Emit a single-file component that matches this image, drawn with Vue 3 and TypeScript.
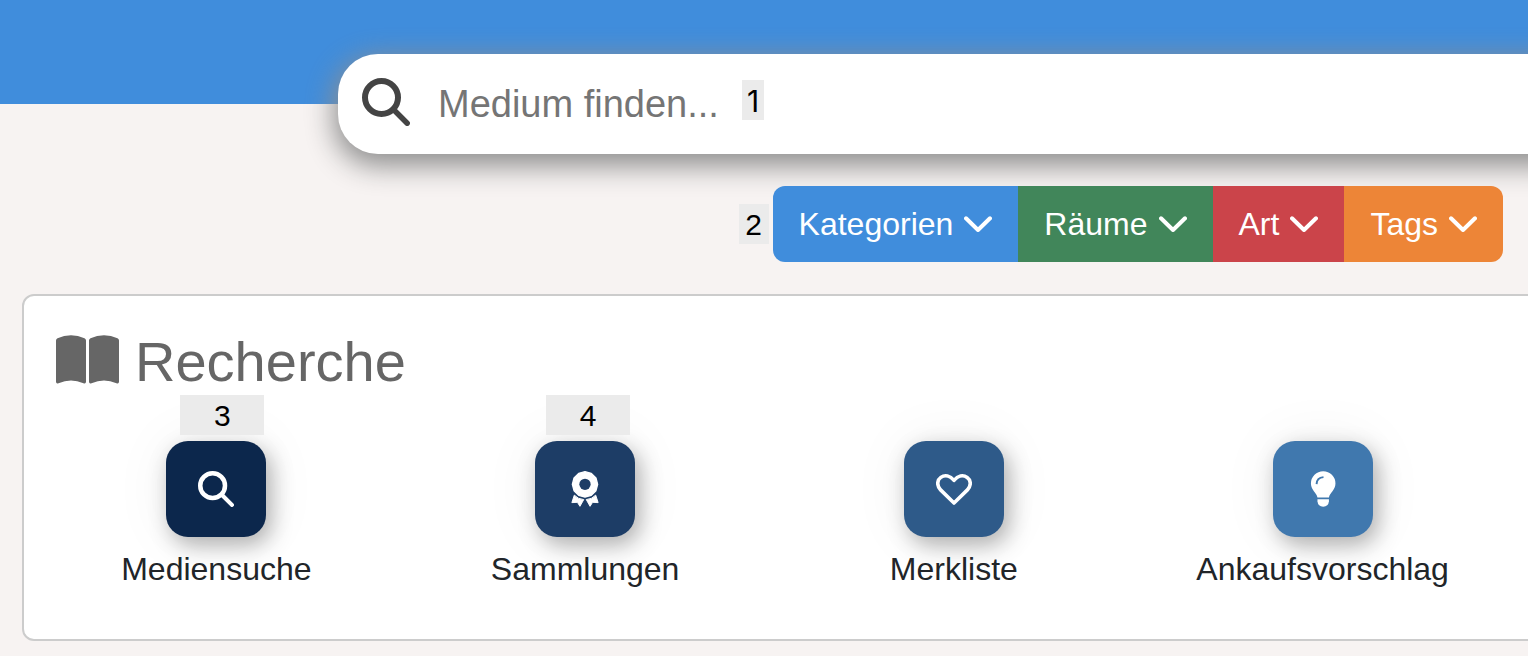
<script setup lang="ts">
interface Filter {
  label: string
  tone: string
}

interface Tile {
  label: string
  icon: 'search' | 'award' | 'heart' | 'bulb'
  tone: string
  badge?: string
}

const filters: Filter[] = [
  { label: 'Kategorien', tone: 'blue' },
  { label: 'Räume', tone: 'green' },
  { label: 'Art', tone: 'red' },
  { label: 'Tags', tone: 'orange' },
]

const tiles: Tile[] = [
  { label: 'Mediensuche', icon: 'search', tone: 'shade-1', badge: '3' },
  { label: 'Sammlungen', icon: 'award', tone: 'shade-2', badge: '4' },
  { label: 'Merkliste', icon: 'heart', tone: 'shade-3' },
  { label: 'Ankaufsvorschlag', icon: 'bulb', tone: 'shade-4' },
]

// Twelve-sided rosette around the centre of the award icon
const rosette = Array.from({ length: 12 }, (_, i) => {
  const angle = (i * Math.PI) / 6
  return `${(18 + 13 * Math.sin(angle)).toFixed(2)},${(13.7 - 13 * Math.cos(angle)).toFixed(2)}`
}).join(' ')
</script>

<template>
  <div class="page">
    <header class="band"></header>

    <form class="search" role="search" @submit.prevent>
      <button class="search-button" type="submit" aria-label="Suchen">
        <svg viewBox="0 0 48 48" width="48" height="48" aria-hidden="true">
          <g fill="none" stroke="currentColor" stroke-width="6" stroke-linecap="round">
            <circle cx="19.5" cy="19.5" r="16.5" />
            <path d="M32 32 45.200 45.200" stroke-width="5.500" />
          </g>
        </svg>
      </button>
      <input class="search-input" type="text" aria-label="Medium finden" placeholder="Medium finden..." />
      <span class="badge badge-hint">1</span>
    </form>

    <div class="filters">
      <span class="badge badge-filter">2</span>
      <div class="group">
        <button v-for="f in filters" :key="f.label" type="button" class="filter" :class="f.tone">
          {{ f.label }}
          <svg viewBox="0 0 28 16" width="28" height="16" aria-hidden="true">
            <path d="M2 2.300 14 14 26 2.300" fill="none" stroke="currentColor" stroke-width="4" stroke-linecap="round" stroke-linejoin="round" />
          </svg>
        </button>
      </div>
    </div>

    <section class="panel">
      <h1 class="title">
        <svg viewBox="0 0 63 49" width="63" height="49" aria-hidden="true">
          <path d="M0 5.5Q0 4 1.5 3.3Q8 .3 15 .3Q22 .3 28.5 3.3Q30 4 30 5.5V46.5Q30 49 27.5 48.2Q15 43 2.5 48.2Q0 49 0 46.5Z" fill="currentColor" />
          <path d="M33 5.5Q33 4 34.5 3.3Q41 .3 48 .3Q55 .3 61.5 3.3Q63 4 63 5.5V46.5Q63 49 60.5 48.2Q48 43 35.5 48.2Q33 49 33 46.5Z" fill="currentColor" />
        </svg>
        Recherche
      </h1>

      <nav class="tiles">
        <a v-for="t in tiles" :key="t.label" href="#" class="tile">
          <span class="tile-icon" :class="t.tone">
            <svg v-if="t.icon === 'search'" viewBox="0 0 48 48" width="36" height="36" aria-hidden="true">
              <g fill="none" stroke="currentColor" stroke-width="6" stroke-linecap="round">
                <circle cx="19.5" cy="19.5" r="16.5" />
                <path d="M32 32 45.2 45.2" stroke-width="5.5" />
              </g>
            </svg>
            <svg v-else-if="t.icon === 'award'" viewBox="0 0 36 37" width="36" height="36" aria-hidden="true">
              <polygon :points="rosette" fill="currentColor" stroke="currentColor" stroke-width="1.4" stroke-linejoin="round" />
              <circle class="cut" cx="18" cy="13.7" r="5.8" />
              <path d="M7 24.8 4.5 32.5 10.2 32.2 12.8 36.3 16.7 29.4Q11 29 7 24.8ZM29 24.8 31.5 32.5 25.8 32.2 23.2 36.3 19.3 29.4Q25 29 29 24.8Z" fill="currentColor" stroke="currentColor" stroke-width="1" stroke-linejoin="round" />
            </svg>
            <svg v-else-if="t.icon === 'heart'" viewBox="0 0 36 36" width="36" height="36" aria-hidden="true">
              <path d="M18 32 4.6 18.9C.6 14.6.9 9.2 4.8 6.4 9 3.5 14 4.6 18 9.3 22 4.6 27 3.5 31.2 6.4 35.1 9.2 35.4 14.6 31.4 18.9Z" fill="none" stroke="currentColor" stroke-width="3.6" stroke-linejoin="round" />
            </svg>
            <svg v-else viewBox="0 0 36 37" width="36" height="36" aria-hidden="true">
              <path d="M12.300 27.200C11.500 22.500 5.600 19.500 5.600 12.800A12.600 12.600 0 0 1 30.800 12.800C30.800 19.500 24.900 22.500 24.100 27.200Z" fill="currentColor" />
              <path d="M12.300 29H24.100V31.200Q23.500 36.800 18.200 36.800 12.900 36.800 12.300 31.200Z" fill="currentColor" />
              <path class="shine" d="M11.400 13.500Q11.600 6.900 18.500 6.300" />
            </svg>
          </span>
          <span v-if="t.badge" class="badge badge-tile" :class="'badge-' + t.icon">{{ t.badge }}</span>
          <span class="tile-label">{{ t.label }}</span>
        </a>
      </nav>
    </section>
  </div>
</template>

<style>
body {
  margin: 0;
  background: #f7f3f2;
}
</style>

<style scoped>
.page {
  min-height: 100vh;
  overflow: hidden;
  box-sizing: border-box;
  padding-bottom: 16px;
  background: #f7f3f2;
  color: #212529;
  font-family: "Liberation Sans", Arial, sans-serif;
  font-size: 32px;
  line-height: 48px;
}

svg {
  display: block;
  flex: none;
}

button,
input {
  border: 0;
  font: inherit;
}

.band {
  height: 104px;
  background: #408ddc;
}

.search {
  position: relative;
  display: flex;
  align-items: center;
  height: 100px;
  box-sizing: border-box;
  margin: -50px -60px 32px 338px;
  padding: 0 24px;
  border-radius: 40px;
  background: #fff;
  box-shadow: 0 8px 28px 4px #8e8e8e;
}

.search-button {
  padding: 0 0 4px;
  background: none;
  color: #444;
}

.search-input {
  flex: 1;
  min-width: 0;
  padding: 0 0 0 28px;
  background: none;
  font-size: 38px;
  outline: 0;
}

.search-input::placeholder {
  color: #757575;
  opacity: 1;
}

.badge {
  padding-top: 2px;
  background: #ebebeb;
  color: #000;
  font-size: 30px;
  line-height: 38px;
  text-align: center;
}

.badge-hint {
  position: absolute;
  top: 26px;
  left: 404px;
  width: 22px;
  font-family: Inter, "Liberation Sans", sans-serif;
}

.filters {
  position: relative;
  display: flex;
  justify-content: flex-end;
  align-items: center;
  gap: 4px;
  padding-right: 25px;
}

.badge-filter {
  width: 30px;
}

.group {
  display: flex;
  overflow: hidden;
  border-radius: 12px;
}

.filter {
  display: flex;
  align-items: center;
  gap: 11px;
  padding: 14px 26px;
  color: #fff;
}

.blue { background: #408ddc; }
.green { background: #41865a; }
.red { background: #cb444a; }
.orange { background: #ed8537; }

.panel {
  margin: 32px -13px 0 22px;
  padding: 32px 32px 46px 8px;
  border: 2px solid #ccc;
  border-radius: 12px;
  background: #fff;
}

.title {
  display: flex;
  align-items: flex-start;
  gap: 16px;
  margin: 0;
  padding: 0 0 45px 24px;
  color: #666;
  font-size: 56px;
  font-weight: 400;
  line-height: 68px;
}

.title svg {
  margin-top: 7px;
}

.tiles {
  display: grid;
  grid-template-columns: repeat(4, 1fr);
}

.tile {
  position: relative;
  display: flex;
  flex-direction: column;
  align-items: center;
  gap: 8px;
  color: inherit;
  text-decoration: none;
}

.tile-icon {
  display: flex;
  align-items: center;
  justify-content: center;
  width: 100px;
  height: 96px;
  box-sizing: border-box;
  padding-bottom: 1px;
  border-radius: 22px;
  color: #fff;
  box-shadow: 5px 8px 22px rgba(0, 0, 0, 0.3), 0 0 60px rgba(0, 0, 0, 0.06);
}

.shade-1 { --tone: #0c274c; background: var(--tone); }
.shade-2 { --tone: #1d3d66; background: var(--tone); }
.shade-3 { --tone: #2e5a89; background: var(--tone); }
.shade-4 { --tone: #4078ae; background: var(--tone); }

.cut {
  fill: var(--tone);
}

.shine {
  fill: none;
  stroke: var(--tone);
  stroke-width: 2;
}

.tile-label {
  position: relative;
}

.badge-tile {
  position: absolute;
  top: -46px;
  left: 50%;
  width: 84px;
}

.badge-search {
  margin-left: -36px;
}

.badge-award {
  margin-left: -39px;
}
</style>
